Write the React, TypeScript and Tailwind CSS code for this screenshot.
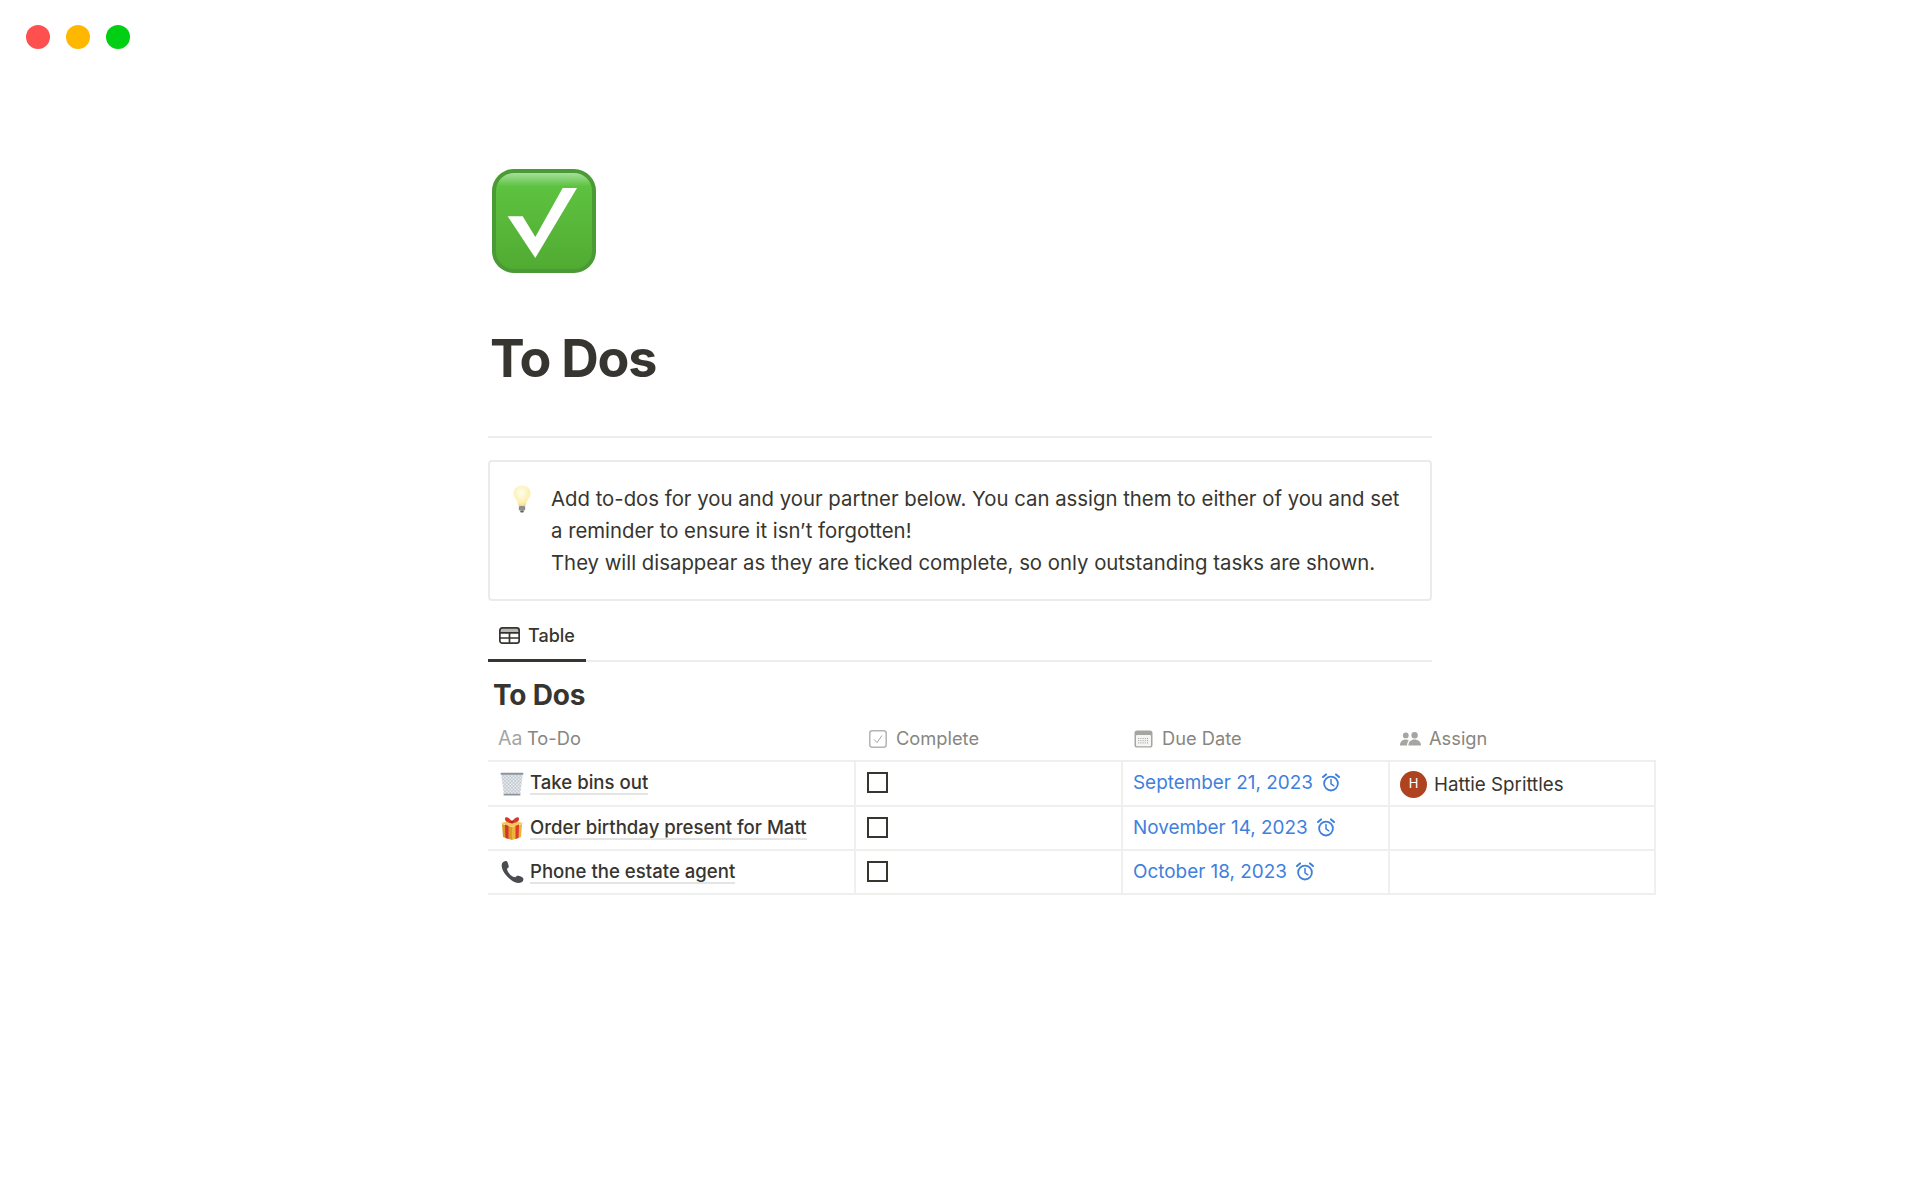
import React from 'react';

const font = "font-['Inter',sans-serif]";

function CheckEmoji() {
  return (
    <svg viewBox="0 0 104 104" className="w-[104px] h-[104px] block">
      <defs>
        <linearGradient id="chk-bg" x1="0" y1="0" x2="0" y2="1">
          <stop offset="0" stopColor="#a5e09c" />
          <stop offset="0.14" stopColor="#5dc23f" />
          <stop offset="1" stopColor="#51ab32" />
        </linearGradient>
      </defs>
      <rect x="0" y="0" width="104" height="104" rx="22" fill="#4a9a35" />
      <rect x="4" y="4" width="96" height="96" rx="18" fill="url(#chk-bg)" />
      <path d="M15.7 47.3 L30.7 47.3 L43.3 68 L70.7 19 L85 19 L43.3 89 Z" fill="#fff" />
    </svg>
  );
}

function Bulb() {
  return (
    <svg viewBox="0 0 18 28" className="w-[18px] h-[28px] block shrink-0">
      <defs>
        <radialGradient id="bulb-bg" cx="0.45" cy="0.35" r="0.7">
          <stop offset="0" stopColor="#fffdf0" />
          <stop offset="0.7" stopColor="#fdf0b0" />
          <stop offset="1" stopColor="#ecd67c" />
        </radialGradient>
      </defs>
      <path d="M9 0.5 C4 0.5 0.5 4 0.5 8.5 C0.5 13 5 15 5.5 21 L12.5 21 C13 15 17.5 13 17.5 8.5 C17.5 4 14 0.5 9 0.5 Z" fill="url(#bulb-bg)" />
      <rect x="5.8" y="21" width="6.4" height="4.5" rx="1" fill="#8e8e8a" />
      <rect x="7.2" y="25.5" width="3.6" height="2" rx="1" fill="#5f5f5b" />
    </svg>
  );
}

function TableIcon() {
  return (
    <svg viewBox="0 0 21 17" className="w-[21px] h-[17px] block" fill="none" stroke="#37352f" strokeWidth="1.7">
      <rect x="0.85" y="0.85" width="19.3" height="15.3" rx="2.4" />
      <path d="M0.8 5.8 H20.2 M0.8 11 H20.2 M10.5 5.8 V16.2" />
      <rect x="1" y="1" width="19" height="4.5" rx="2" fill="#37352f" fillOpacity="0.35" stroke="none" />
    </svg>
  );
}

function HeaderCheck() {
  return (
    <svg viewBox="0 0 18 18" className="w-[18px] h-[18px] block shrink-0" fill="none">
      <rect x="0.8" y="0.8" width="16.4" height="16.4" rx="2.4" stroke="#b4b4b1" strokeWidth="1.5" />
      <path d="M5 9.4 L8 12.6 L13 5.4" stroke="#a5a5a2" strokeWidth="1" />
    </svg>
  );
}

function HeaderCalendar() {
  const dots = [];
  for (let r = 0; r < 3; r++) {
    for (let c = 0; c < 5; c++) {
      dots.push(<rect key={`${r}-${c}`} x={4.2 + c * 2.2} y={8 + r * 2.2} width="1" height="1" fill="#9b9a97" />);
    }
  }
  return (
    <svg viewBox="0 0 19 18" className="w-[19px] h-[18px] block shrink-0" fill="none">
      <rect x="0.5" y="0.5" width="18" height="17" rx="2.6" fill="#a5a5a2" />
      <rect x="2" y="5" width="15" height="11.2" rx="1" fill="#f5f5f4" />
      {dots}
    </svg>
  );
}

function HeaderPeople() {
  return (
    <svg viewBox="0 0 21 14" className="w-[21px] h-[14px] block shrink-0" fill="#a5a5a2">
      <circle cx="5.8" cy="3.4" r="2.9" />
      <circle cx="14.6" cy="3.2" r="3.2" />
      <path d="M0 13.6 C0 9.6 2.6 7.6 5.8 7.6 C7 7.6 8 7.9 8.8 8.4 C7.6 9.6 7 11.4 7 13.6 Z" />
      <path d="M8.4 13.6 C8.4 9.6 11 7.4 14.6 7.4 C18.2 7.4 21 9.6 21 13.6 Z" />
    </svg>
  );
}

function Alarm() {
  return (
    <svg viewBox="0 0 18 19" className="w-[18px] h-[19px] block shrink-0 -mt-[2px]" fill="none" stroke="#3f80dc" strokeWidth="1.8" strokeLinecap="round">
      <circle cx="9" cy="10.6" r="6.9" />
      <path d="M9 6.4 V10.8 L11.8 12.8" strokeWidth="1.5" />
      <path d="M1 4 L4 1.4 M17 4 L14 1.4" strokeWidth="2" />
    </svg>
  );
}

function Trash() {
  return (
    <svg viewBox="0 0 24 24" className="w-[24px] h-[24px] block shrink-0">
      <defs>
        <pattern id="trash-mesh" width="2.4" height="2.4" patternUnits="userSpaceOnUse" patternTransform="rotate(45)">
          <rect width="2.4" height="2.4" fill="#e6eaed" />
          <path d="M0 0 H2.4 M0 0 V2.4" stroke="#a4aeb7" strokeWidth="0.7" />
        </pattern>
      </defs>
      <path d="M1.2 2 H22.8 L20.2 23 H3.8 Z" fill="url(#trash-mesh)" />
      <rect x="0.5" y="0.8" width="23" height="2" rx="1" fill="#8b959e" />
      <rect x="3.5" y="21.8" width="17" height="1.8" rx="0.9" fill="#8b959e" />
    </svg>
  );
}

function Gift() {
  return (
    <svg viewBox="0 0 24 24" className="w-[24px] h-[24px] block shrink-0">
      <path d="M2 8 L12 11 L12 24 L3 21 Z" fill="#d99a26" />
      <path d="M22 8 L12 11 L12 24 L21 21 Z" fill="#eab53a" />
      <path d="M0.5 7 L12 4.5 L23.5 7 L12 11 Z" fill="#f3c856" />
      <path d="M5 8.6 L8.5 9.8 L8.5 23 L5.4 22 Z" fill="#d5342d" />
      <path d="M19 8.6 L15.5 9.8 L15.5 23 L18.6 22 Z" fill="#e0392f" />
      <path d="M12 5.5 C8 0 4.6 0.5 5 3.5 C5.3 6 9 7 12 7 C15 7 18.7 6 19 3.5 C19.4 0.5 16 0 12 5.5 Z" fill="#d8352d" />
      <circle cx="12" cy="6" r="1.6" fill="#b5211d" />
    </svg>
  );
}

function Phone() {
  return (
    <svg viewBox="0 0 24 24" className="w-[24px] h-[24px] block shrink-0">
      <path d="M2 3.5 C3 1.4 5 0.6 6.4 1 C7.4 1.4 8 3.2 8.6 5.6 C9 7 8.4 8 7 8.6 C6.8 11.6 11.6 17.4 15.4 17.2 C16.2 16 17.2 15.4 18.6 15.8 C20.6 16.4 22.6 17.2 23.2 18.2 C23.8 19.6 23 21.6 21 22.6 C18.4 23.8 14 22.8 9.6 18.8 C4.2 14 0.6 7.6 2 3.5 Z" fill="#4a4c50" />
    </svg>
  );
}

const headerCell = 'flex items-center h-[44px] pt-px text-[18.3px] text-[#87867f]';
const rowCell = 'flex items-center border-r-2 border-[#efefee]';

const rows = [
  { icon: <Trash />, title: 'Take bins out', date: 'September 21, 2023', assign: true, h: 'h-[45px]' },
  { icon: <Gift />, title: 'Order birthday present for Matt', date: 'November 14, 2023', assign: false, h: 'h-[44px]' },
  { icon: <Phone />, title: 'Phone the estate agent', date: 'October 18, 2023', assign: false, h: 'h-[46px]' },
];

export default function App() {
  return (
    <div className={`${font} min-h-[1200px] bg-white text-[#37352f]`}>
      <div className="flex gap-4 pt-[25px] pl-[26px]">
        <div className="w-6 h-6 rounded-full bg-[#ff5050]" />
        <div className="w-6 h-6 rounded-full bg-[#ffb700]" />
        <div className="w-6 h-6 rounded-full bg-[#00cf14]" />
      </div>

      <div className="w-[944px] mx-auto">
        <div className="pl-1 pt-[120px]">
          <CheckEmoji />
        </div>
        <h1 className="pl-[2px] mt-[56px] text-[52px] leading-[60px] font-bold tracking-[-1.2px]">To Dos</h1>
        <div className="mt-[47px] h-[2px] bg-[#ededec]" />

        <div className="mt-[22px] h-[141px] flex gap-[21px] border-2 border-[#ebebea] rounded-[4px] pl-[23px] pt-[23px]">
          <Bulb />
          <p className="text-[20.33px] leading-[32px] -mt-[2px] -ml-px whitespace-nowrap">
            Add to-dos for you and your partner below. You can assign them to either of you and set
            <br />
            a reminder to ensure it isn’t forgotten!
            <br />
            They will disappear as they are ticked complete, so only outstanding tasks are shown.
          </p>
        </div>

        <div className="mt-[17px] h-[44px] flex border-b-2 border-[#ededec]">
          <div className="w-[98px] h-[44px] flex items-center gap-[8px] pl-[11px] pb-[7px] border-b-[3px] border-[#37352f] text-[18px] font-medium">
            <TableIcon />
            <span>Table</span>
          </div>
        </div>

        <h2 className="pl-[5px] mt-[13px] text-[28px] leading-[40px] font-bold tracking-[-0.2px]">To Dos</h2>

        <div className="w-[1168px] mt-[1px] grid grid-cols-[368px_267px_267px_266px]">
          <div className={`${headerCell} pl-[10px] gap-[6px]`}>
            <span className="w-[23px] text-[19.5px] text-[#a5a5a2]">Aa</span>
            <span>To-Do</span>
          </div>
          <div className={`${headerCell} pl-[13px] gap-[9px]`}>
            <HeaderCheck />
            <span>Complete</span>
          </div>
          <div className={`${headerCell} pl-[11px] gap-[9px]`}>
            <HeaderCalendar />
            <span>Due Date</span>
          </div>
          <div className={`${headerCell} pl-[10px] gap-[8px]`}>
            <HeaderPeople />
            <span>Assign</span>
          </div>

          {rows.map((row, i) => (
            <div key={row.title} className={`col-span-4 grid grid-cols-[368px_267px_267px_266px] border-t-2 border-[#efefee] last:border-b-2 ${row.h}`}>
              <div className={`${rowCell} pl-[12px] gap-[6px]`}>
                {row.icon}
                <span className={`text-[18.6px] font-medium leading-[22px] border-b-2 border-[#e4e4e3] ${i === 0 ? '-mt-[1px]' : ''}`}>{row.title}</span>
              </div>
              <div className={`${rowCell} pl-[11px]`}>
                <div className="w-[21px] h-[21px] -mt-[2px] border-2 border-[#37352f]" />
              </div>
              <div className={`${rowCell} pl-[10px] gap-[9px]`}>
                <span className="text-[18.9px] text-[#3f80dc] leading-none">{row.date}</span>
                <Alarm />
              </div>
              <div className={`${rowCell} pl-[10px] gap-[7px]`}>
                {row.assign && (
                  <>
                    <div className="w-[27px] h-[27px] mt-px rounded-full bg-[#b0431f] text-white text-[13px] flex items-center justify-center">H</div>
                    <span className="text-[18.75px] mt-[3px]">Hattie Sprittles</span>
                  </>
                )}
              </div>
            </div>
          ))}
        </div>
      </div>
    </div>
  );
}
